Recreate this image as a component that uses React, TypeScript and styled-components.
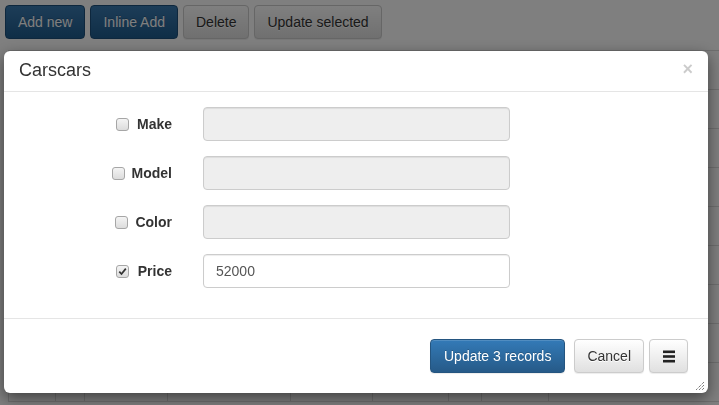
import React from "react";
import styled, { createGlobalStyle, css } from "styled-components";

const GlobalStyle = createGlobalStyle`
  html, body {
    margin: 0;
    padding: 0;
    background: #fff;
    font-family: "Liberation Sans", Arial, Helvetica, sans-serif;
    font-size: 14px;
    color: #333;
    overflow: hidden;
  }
  * { box-sizing: border-box; }
`;

const Page = styled.div`
  width: 719px;
  height: 405px;
  overflow: hidden;
  display: flex;
  flex-direction: column;
`;

const Toolbar = styled.div`
  display: flex;
  gap: 5px;
  padding: 5px 5px 0;
`;

const btnBase = css`
  height: 34px;
  padding: 6px 12px;
  font-family: "Liberation Sans", Arial, sans-serif;
  font-size: 14px;
  line-height: 20px;
  border-radius: 4px;
  border: 1px solid transparent;
  white-space: nowrap;
  cursor: pointer;
  display: inline-flex;
  align-items: center;
  justify-content: center;
`;

const Button = styled.button<{ $variant?: "primary" | "dark" | "default" }>`
  ${btnBase}
  ${({ $variant }) =>
    $variant === "primary"
      ? css`
          color: #fff;
          background-image: linear-gradient(to bottom, #337ab7 0, #265a88 100%);
          border-color: #245580;
          text-shadow: 0 -1px 0 rgba(0, 0, 0, 0.2);
          box-shadow: inset 0 1px 0 rgba(255, 255, 255, 0.15), 0 1px 1px rgba(0, 0, 0, 0.075);
        `
      : $variant === "dark"
      ? css`
          color: #fff;
          background-image: linear-gradient(to bottom, #3a7ab0 0, #1f5c8e 100%);
          border-color: #1d4f7a;
          text-shadow: 0 -1px 0 rgba(0, 0, 0, 0.2);
        `
      : css`
          color: #333;
          background-image: linear-gradient(to bottom, #fff 0, #e0e0e0 100%);
          border-color: #ccc;
          text-shadow: 0 1px 0 #fff;
          box-shadow: inset 0 1px 0 rgba(255, 255, 255, 0.15), 0 1px 1px rgba(0, 0, 0, 0.075);
        `}
`;

const Table = styled.table`
  margin: 11px 0 0 8px;
  border-collapse: collapse;
  table-layout: fixed;
  width: 711px;
  flex-shrink: 0;
`;

const Cell = styled.td<{ $w: number }>`
  width: ${({ $w }) => $w}px;
  height: 39px;
  border: 1px solid #ddd;
  padding: 0;
`;

const HeadCell = styled.th<{ $w: number }>`
  width: ${({ $w }) => $w}px;
  height: 39px;
  border: 1px solid #ddd;
  padding: 0;
`;

const Overlay = styled.div`
  position: fixed;
  inset: 0;
  background: rgba(0, 0, 0, 0.5);
`;

const Modal = styled.div`
  position: fixed;
  left: 4px;
  top: 51px;
  width: 704px;
  background: #fff;
  border-radius: 6px;
  box-shadow: 0 5px 15px rgba(0, 0, 0, 0.5);
  display: flex;
  flex-direction: column;
`;

const Header = styled.div`
  height: 41px;
  padding: 0 15px 2px 15px;
  border-bottom: 1px solid #e5e5e5;
  display: flex;
  align-items: center;
  justify-content: space-between;
`;

const Title = styled.h4`
  margin: 0;
  font-size: 18px;
  font-weight: normal;
  color: #333;
  line-height: 24px;
`;

const Close = styled.button`
  border: 0;
  background: transparent;
  padding: 0;
  margin-top: -2px;
  font-family: "Liberation Sans", Arial, sans-serif;
  font-size: 18px;
  font-weight: bold;
  line-height: 1;
  color: #000;
  opacity: 0.2;
  cursor: pointer;
`;

const Body = styled.div`
  padding: 15px 15px 30px;
  display: flex;
  flex-direction: column;
  gap: 15px;
`;

const FormRow = styled.div`
  display: grid;
  grid-template-columns: 153px 307px;
  column-gap: 31px;
  align-items: center;
`;

const Label = styled.label<{ $gap: number }>`
  justify-self: end;
  display: flex;
  align-items: center;
  gap: ${({ $gap }) => $gap}px;
  font-weight: bold;
  font-size: 14px;
  color: #333;
`;

const Box = styled.span`
  width: 13px;
  height: 13px;
  border: 1px solid #a6a6a6;
  border-radius: 3px;
  background-image: linear-gradient(to bottom, #f4f4f4 0, #dcdcdc 100%);
  display: inline-flex;
  align-items: center;
  justify-content: center;
`;

const Input = styled.input`
  width: 307px;
  height: 34px;
  padding: 6px 12px;
  border: 1px solid #ccc;
  border-radius: 4px;
  font-family: "Liberation Sans", Arial, sans-serif;
  font-size: 14px;
  color: #555;
  background: #fff;
  box-shadow: inset 0 1px 1px rgba(0, 0, 0, 0.075);
  outline: none;
  &:disabled {
    background: #eee;
  }
`;

const Footer = styled.div`
  position: relative;
  border-top: 1px solid #e5e5e5;
  padding: 20px 20px 20px;
  display: flex;
  justify-content: flex-end;
  align-items: center;
`;

const FooterGap = styled.span<{ $w: number }>`
  width: ${({ $w }) => $w}px;
`;

const WideButton = styled(Button)`
  padding: 6px 13px;
`;

const MenuButton = styled(Button)`
  width: 39px;
  padding: 0;
`;

const Grip = styled.svg`
  position: absolute;
  right: 4px;
  bottom: 3px;
`;

const Checkbox = ({ checked }: { checked?: boolean }) => (
  <Box>
    {checked && (
      <svg width="9" height="9" viewBox="0 0 9 9">
        <path d="M1.3 4.6 L3.5 7 L7.8 1.6" fill="none" stroke="#333" strokeWidth="1.7" />
      </svg>
    )}
  </Box>
);

const cols = [47, 29, 83, 123, 82, 76, 33, 67, 171];

const fields = [
  { name: "Make", gap: 8, value: "", checked: false },
  { name: "Model", gap: 7, value: "", checked: false },
  { name: "Color", gap: 7, value: "", checked: false },
  { name: "Price", gap: 9, value: "52000", checked: true },
];

export default function App() {
  return (
    <>
      <GlobalStyle />
      <Page>
        <Toolbar>
          <Button $variant="dark">Add new</Button>
          <Button $variant="dark">Inline Add</Button>
          <Button>Delete</Button>
          <Button>Update selected</Button>
        </Toolbar>
        <Table>
          <thead>
            <tr>
              {cols.map((w, i) => (
                <HeadCell key={i} $w={w} />
              ))}
            </tr>
          </thead>
          <tbody>
            {Array.from({ length: 8 }).map((_, r) => (
              <tr key={r}>
                {cols.map((w, i) => (
                  <Cell key={i} $w={w} />
                ))}
              </tr>
            ))}
          </tbody>
        </Table>
      </Page>
      <Overlay />
      <Modal>
        <Header>
          <Title>Carscars</Title>
          <Close aria-label="Close">×</Close>
        </Header>
        <Body>
          {fields.map((f) => (
            <FormRow key={f.name}>
              <Label $gap={f.gap}>
                <Checkbox checked={f.checked} />
                {f.name}
              </Label>
              <Input disabled={!f.checked} defaultValue={f.value} />
            </FormRow>
          ))}
        </Body>
        <Footer>
          <WideButton $variant="primary">Update 3 records</WideButton>
          <FooterGap $w={9} />
          <Button>Cancel</Button>
          <FooterGap $w={5} />
          <MenuButton>
            <svg width="12" height="13" viewBox="0 0 12 13">
              <rect x="0" y="0.5" width="12" height="2.6" fill="#222" />
              <rect x="0" y="5.2" width="12" height="2.6" fill="#222" />
              <rect x="0" y="9.9" width="12" height="2.6" fill="#222" />
            </svg>
          </MenuButton>
          <Grip width="8" height="8" viewBox="0 0 8 8">
            <path d="M8 0 L0 8 M8 3 L3 8 M8 6 L6 8" stroke="#444" strokeWidth="1" strokeDasharray="1 1" />
          </Grip>
        </Footer>
      </Modal>
    </>
  );
}
